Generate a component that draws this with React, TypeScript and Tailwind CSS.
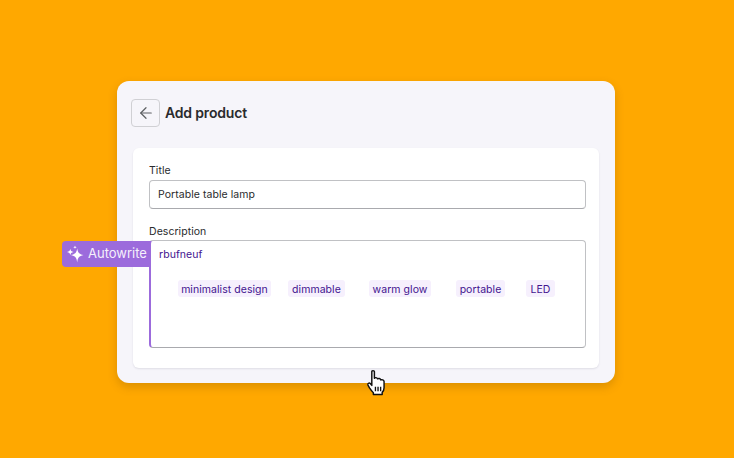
import { ArrowLeft } from 'lucide-react'

const tags = [
  { label: 'minimalist design', className: 'w-[93px] mr-[17px]' },
  { label: 'dimmable', className: 'w-[57px] mr-[24px]' },
  { label: 'warm glow', className: 'w-[62px] mr-[25px]' },
  { label: 'portable', className: 'w-[49px] mr-[21px]' },
  { label: 'LED', className: 'w-[29px]' },
]

function Sparkles() {
  return (
    <svg width="18" height="18" viewBox="0 0 18 18" fill="white">
      <path d="M11.200 3.200C11.800 7.600 13 9 17.500 10 13 11 11.800 12.500 11.200 17.500 10.600 12.500 9.400 11 4.900 10 9.400 9 10.600 7.600 11.200 3.200Z" />
      <path d="M4.300 3.800C4.600 5.900 5.300 6.600 7.600 7 5.300 7.400 4.600 8.200 4.300 10.300 4 8.200 3.300 7.400 1 7 3.300 6.600 4 5.900 4.300 3.800Z" />
      <path d="M9 .5C9.200 1.700 9.600 2.100 10.800 2.300 9.600 2.500 9.200 2.900 9 4.100 8.800 2.900 8.400 2.500 7.200 2.300 8.400 2.100 8.800 1.700 9 .5Z" />
    </svg>
  )
}

function HandCursor() {
  return (
    <svg width="22" height="27" viewBox="0 0 20 26">
      <path
        d="M5 2.500C5 1.300 7.500 1.300 7.500 2.500V9C8 8 10 8 10.500 9.500 11.500 8.700 13.300 9 13.600 10.500 14.800 10 16.500 10.500 16.800 12V18C16.800 20 16 21.500 15 22.500V24.500H6.500V22.800C5 21.500 3.800 19.800 2.800 18.200L1.300 15.500C.7 14 2.500 13 3.500 14L5 15.800Z"
        fill="white"
        stroke="#111"
        strokeWidth="1.400"
        strokeLinejoin="round"
      />
      <path d="M8.500 17V21.500M11 17V21.500M13.500 17V21.500" stroke="#111" strokeWidth="1.300" />
    </svg>
  )
}

export default function App() {
  return (
    <div className="w-[734px] h-[458px] bg-[#ffa800] overflow-hidden pt-[81px] pl-[117px] font-['Inter',sans-serif] text-[#2a2b2d]">
      <div className="relative w-[498px] h-[302px] bg-[#f6f5fa] rounded-[12px] shadow-[0_4px_10px_rgba(90,60,0,0.22)] pt-[18px] px-[16px]">
        <div className="flex items-center -ml-[2px] h-[28px] gap-[5px]">
          <button className="w-[29px] h-[28px] flex items-center justify-center border border-[#d0d0d4] rounded-[4px] bg-[#f6f5fa]">
            <ArrowLeft className="w-[18px] h-[18px] text-[#5c5f62]" strokeWidth={1.6} />
          </button>
          <h1 className="text-[14px] leading-[28px] font-semibold tracking-[-0.18px]">Add product</h1>
        </div>

        <div className="mt-[21px] w-[466px] h-[220px] bg-white rounded-[6px] shadow-[0_1px_2px_rgba(60,60,80,0.12)] pt-[15px] px-[16px]">
          <label className="block text-[10.5px] leading-[16px] tracking-[0.05px]">Title</label>
          <div className="mt-[1px] w-[437px] h-[29px] border border-[#c0c1c4] border-b-[#a9aaae] rounded-[4px] pl-[8px] text-[10.5px] leading-[28px] tracking-[0.05px]">
            Portable table lamp
          </div>

          <label className="block mt-[15px] text-[10.5px] leading-[16px] tracking-[0.05px]">Description</label>
          <div className="w-[437px] h-[108px] border border-[#c0c1c4] border-b-[#a9aaae] border-l-2 border-l-[#9c6bdc] rounded-[4px] pl-[8px] pt-[7px] text-[#43148f] text-[10.5px] tracking-[0.05px]">
            <div className="leading-[14px]">rbufneuf</div>
            <div className="flex mt-[18px] ml-[19px]">
              {tags.map((tag) => (
                <span
                  key={tag.label}
                  className={`${tag.className} h-[17px] shrink-0 rounded-[3px] bg-[#f6f0fd] text-center leading-[19px] whitespace-nowrap`}
                >
                  {tag.label}
                </span>
              ))}
            </div>
          </div>
        </div>

        <div className="absolute left-[-55px] top-[160px] w-[88px] h-[26px] bg-[#9c6bdc] rounded-l-[4px] flex items-center gap-[4px] pl-[4px] text-white text-[13px]">
          <Sparkles />
          <span className="opacity-90">Autowrite</span>
        </div>

        <div className="absolute left-[249px] top-[288px]">
          <HandCursor />
        </div>
      </div>
    </div>
  )
}
